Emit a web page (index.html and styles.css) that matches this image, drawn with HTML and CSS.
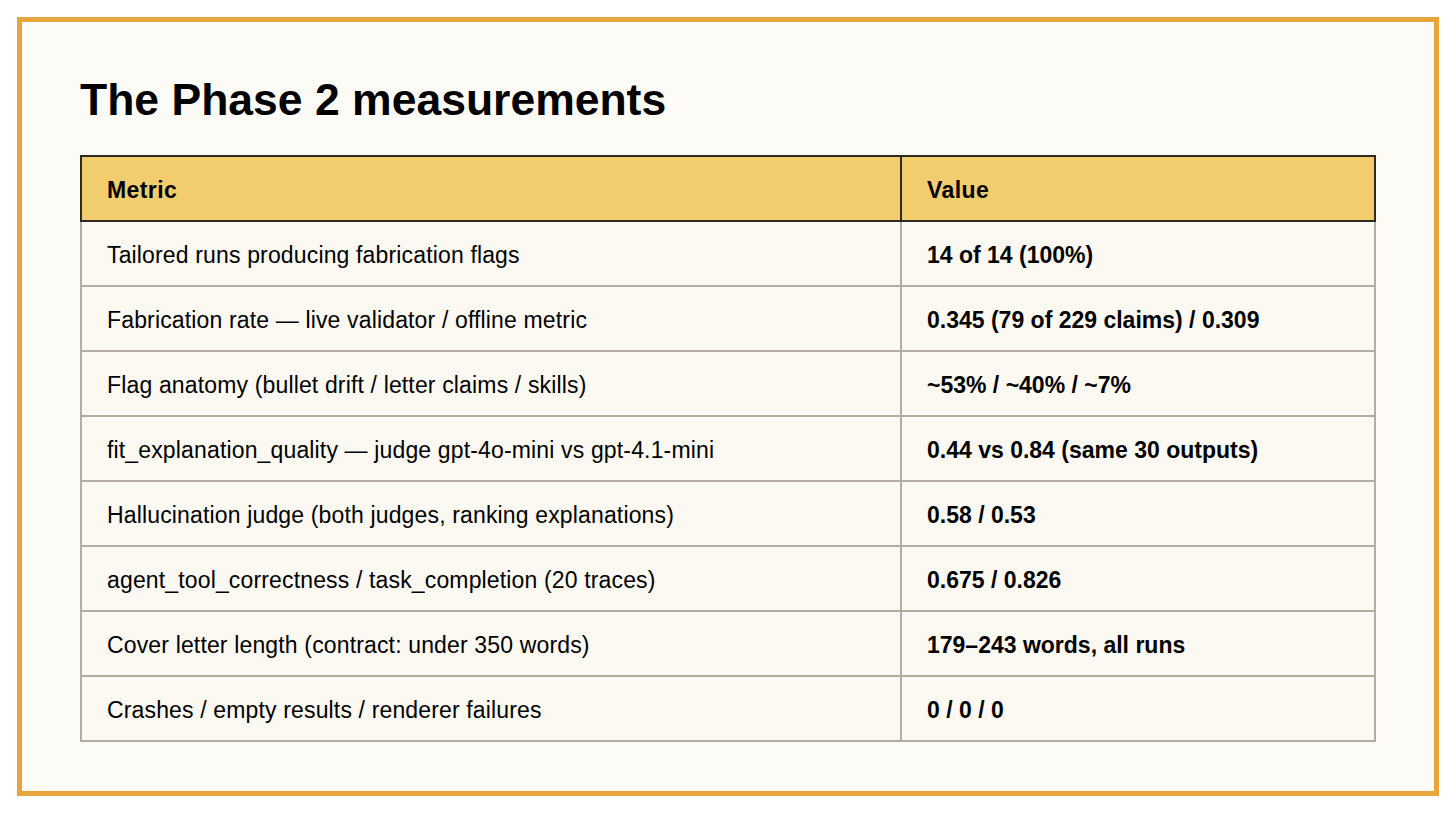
FILE: index.html
```html
<!DOCTYPE html>
<html lang="en">
<head>
<meta charset="utf-8">
<title>The Phase 2 measurements</title>
<link rel="stylesheet" href="styles.css">
</head>
<body>
<div class="frame">
  <h1 class="title">The Phase 2 measurements</h1>
  <table class="metrics">
    <thead>
      <tr><th class="col-metric">Metric</th><th class="col-value">Value</th></tr>
    </thead>
    <tbody>
      <tr><td>Tailored runs producing fabrication flags</td><td class="val">14 of 14 (100%)</td></tr>
      <tr><td>Fabrication rate — live validator / offline metric</td><td class="val">0.345 (79 of 229 claims) / 0.309</td></tr>
      <tr><td>Flag anatomy (bullet drift / letter claims / skills)</td><td class="val">~53% / ~40% / ~7%</td></tr>
      <tr><td>fit_explanation_quality — judge gpt-4o-mini vs gpt-4.1-mini</td><td class="val">0.44 vs 0.84 (same 30 outputs)</td></tr>
      <tr><td>Hallucination judge (both judges, ranking explanations)</td><td class="val">0.58 / 0.53</td></tr>
      <tr><td>agent_tool_correctness / task_completion (20 traces)</td><td class="val">0.675 / 0.826</td></tr>
      <tr><td>Cover letter length (contract: under 350 words)</td><td class="val">179–243 words, all runs</td></tr>
      <tr><td>Crashes / empty results / renderer failures</td><td class="val">0 / 0 / 0</td></tr>
    </tbody>
  </table>
</div>
</body>
</html>
```

FILE: styles.css
```css
html, body {
  margin: 0;
  padding: 0;
  background: #ffffff;
}
body {
  font-family: "Liberation Sans", Arial, sans-serif;
  color: #000;
}
.frame {
  box-sizing: border-box;
  margin: 17px 0 0 17px;
  width: 1422px;
  height: 779px;
  border: 5px solid #e9a43a;
  background: #fdfbf5;
  padding: 0 0 0 58px;
}
.title {
  margin: 0;
  padding-top: 52px;
  font-size: 44.5px;
  line-height: 52px;
  font-weight: 700;
}
.metrics {
  margin-top: 29px;
  border-collapse: collapse;
  width: 1296px;
  font-size: 23px;
  background: #fbf9f2;
}
.metrics th {
  background: #f2cd6d;
  border: 2px solid #2e2a22;
  text-align: left;
  font-weight: 700;
  height: 60px;
  padding: 3px 0 0 25px;
  letter-spacing: 0.4px;
}
.col-metric { width: 793px; }
.metrics td {
  border: 2px solid #b3ad9f;
  height: 60px;
  padding: 3px 0 0 25px;
  letter-spacing: 0.15px;
}
.metrics td.val {
  font-weight: 700;
  letter-spacing: 0;
}
.metrics tbody tr:first-child td {
  border-top: 2px solid #2e2a22;
}
```
